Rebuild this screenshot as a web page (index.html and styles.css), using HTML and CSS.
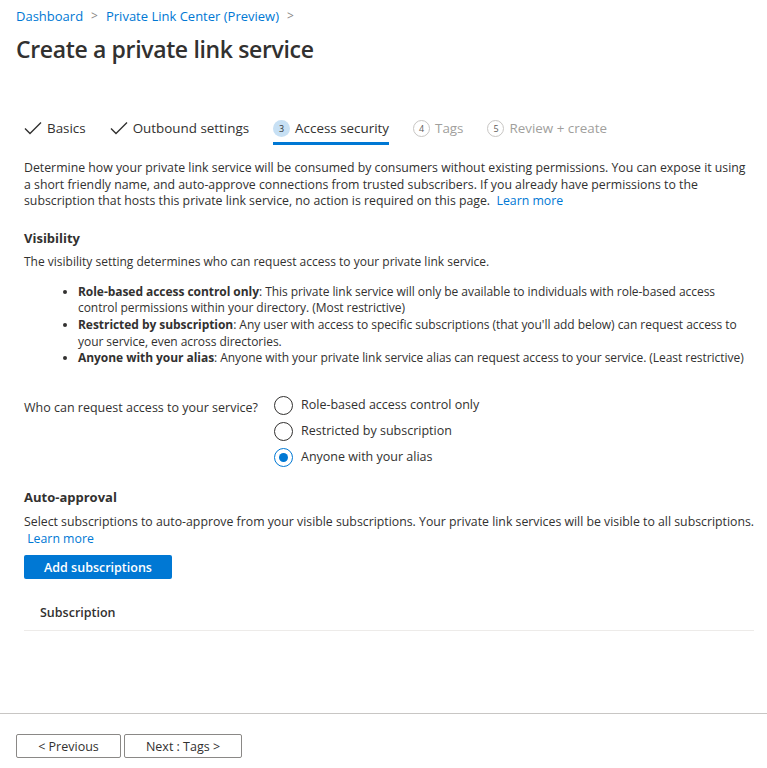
FILE: index.html
```html
<!DOCTYPE html>
<html>
<head>
<meta charset="utf-8">
<link rel="stylesheet" href="styles.css">
</head>
<body>
<div class="page">
  <header class="header">
    <nav class="breadcrumb">
      <a class="crumb">Dashboard</a>
      <span class="sep">&gt;</span>
      <a class="crumb">Private Link Center (Preview)</a>
      <span class="sep">&gt;</span>
    </nav>
    <h1 class="title">Create a private link service</h1>
  </header>

  <main class="main">
    <div class="tabs">
      <div class="tab done">
        <svg class="check" width="18" height="14" viewBox="0 0 18 14"><path d="M1 7.5 L6 12.5 L17 1.5" fill="none" stroke="#323130" stroke-width="1.4"/></svg>
        <span>Basics</span>
      </div>
      <div class="tab done">
        <svg class="check" width="18" height="14" viewBox="0 0 18 14"><path d="M1 7.5 L6 12.5 L17 1.5" fill="none" stroke="#323130" stroke-width="1.4"/></svg>
        <span>Outbound settings</span>
      </div>
      <div class="tab active">
        <span class="num">3</span>
        <span>Access security</span>
      </div>
      <div class="tab todo">
        <span class="num">4</span>
        <span>Tags</span>
      </div>
      <div class="tab todo">
        <span class="num">5</span>
        <span>Review + create</span>
      </div>
    </div>

    <p class="intro">Determine how your private link service will be consumed by consumers without existing permissions. You can expose it using a short friendly name, and auto-approve connections from trusted subscribers. If you already have permissions to the subscription that hosts this private link service, no action is required on this page. &nbsp;<a class="link">Learn more</a></p>

    <h2 class="section-title">Visibility</h2>
    <p class="text">The visibility setting determines who can request access to your private link service.</p>
    <ul class="bullets">
      <li><b>Role-based access control only</b>: This private link service will only be available to individuals with role-based access control permissions within your directory. (Most restrictive)</li>
      <li><b>Restricted by subscription</b>: Any user with access to specific subscriptions (that you'll add below) can request access to your service, even across directories.</li>
      <li><b>Anyone with your alias</b>: Anyone with your private link service alias can request access to your service. (Least restrictive)</li>
    </ul>

    <div class="field">
      <div class="field-label">Who can request access to your service?</div>
      <div class="radios">
        <label class="radio"><span class="dot"></span>Role-based access control only</label>
        <label class="radio"><span class="dot"></span>Restricted by subscription</label>
        <label class="radio checked"><span class="dot"></span>Anyone with your alias</label>
      </div>
    </div>

    <h2 class="section-title auto">Auto-approval</h2>
    <p class="text narrow">Select subscriptions to auto-approve from your visible subscriptions. Your private link services will be visible to all subscriptions.<br>&nbsp;<a class="link">Learn more</a></p>
    <button class="primary">Add subscriptions</button>

    <div class="grid-head">Subscription</div>
  </main>

  <footer class="footer">
    <button class="btn prev">&lt; Previous</button>
    <button class="btn next">Next : Tags &gt;</button>
  </footer>
</div>
</body>
</html>
```
FILE: styles.css
```css
* { box-sizing: border-box; }
html, body { margin: 0; padding: 0; background: #fff; }
body {
  font-family: "Segoe UI", "Open Sans", "Noto Sans", sans-serif;
  color: #323130;
  font-size: 12px;
  width: 767px;
  height: 768px;
  overflow: hidden;
}
.page { display: flex; flex-direction: column; height: 768px; }

.header { padding: 6px 16px 0; }
.breadcrumb { display: flex; align-items: center; gap: 8px; font-size: 13px; line-height: 20px; }
.crumb { color: #0078d4; }
.sep { color: #8a8886; font-size: 12px; }
.title { margin: 8px 0 0; font-size: 23px; font-weight: 600; line-height: 30px; letter-spacing: -0.35px; color: #323130; }

.main { flex: 1; padding: 0 13px 0 24px; }

.tabs { display: flex; align-items: center; gap: 24px; margin-top: 47px; height: 34px; font-size: 13.4px; }
.tab { display: flex; align-items: center; gap: 5px; height: 34px; position: relative; }
.tab.done { color: #323130; }
.tab .num { width: 17px; height: 17px; border-radius: 50%; font-size: 9px; display: inline-flex; align-items: center; justify-content: center; }
.tab.active { color: #323130; }
.tab.active .num { background: #c7e0f4; color: #323130; }
.tab.active::after { content: ""; position: absolute; left: 0; right: 0; bottom: 0; height: 3px; background: #0078d4; }
.tab.todo { color: #a19f9d; }
.tab.todo .num { border: 1px solid #c8c6c4; color: #605e5c; }

.intro { margin: 15px 0 0; line-height: 16.5px; font-size: 12.3px; max-width: 724px; }
.link { color: #0078d4; }
.section-title { margin: 18px 0 0; font-size: 13px; font-weight: 700; line-height: 20px; }
.text { margin: 5px 0 0; line-height: 17px; }
.bullets { margin: 14px 0 0; padding-left: 54px; font-size: 12px; letter-spacing: -0.05px; }
.bullets li { line-height: 16.7px; padding-left: 0; }

.field { display: flex; margin-top: 28px; font-size: 12.5px; }
.field-label { width: 250px; line-height: 20px; padding-top: 3px; }
.radios { display: flex; flex-direction: column; gap: 6px; }
.radio { display: flex; align-items: center; gap: 8px; line-height: 20px; }
.dot { width: 19px; height: 19px; border: 1px solid #323130; border-radius: 50%; position: relative; }
.radio.checked .dot { border-color: #0078d4; }
.radio.checked .dot::after { content: ""; position: absolute; left: 4px; top: 4px; width: 9px; height: 9px; border-radius: 50%; background: #0078d4; }

.section-title.auto { margin-top: 20px; }
.narrow { margin-top: 6px; font-size: 12.3px; white-space: nowrap; }
.primary {
  margin-top: 8px;
  width: 148px; height: 24px;
  background: #0078d4; color: #fff; border: none; border-radius: 2px;
  font-family: inherit; font-size: 12.5px; font-weight: 600;
}
.grid-head { margin-top: 24px; padding: 0 16px; height: 28px; line-height: 20px; font-weight: 600; font-size: 12.5px; border-bottom: 1px solid #edebe9; }

.footer { border-top: 1px solid #c8c6c4; height: 55px; padding: 20px 16px 0; display: flex; gap: 3px; }
.btn { height: 24px; background: #fff; border: 1px solid #8a8886; border-radius: 2px; font-family: inherit; font-size: 12.5px; color: #323130; }
.prev { width: 105px; }
.next { width: 118px; }
```
